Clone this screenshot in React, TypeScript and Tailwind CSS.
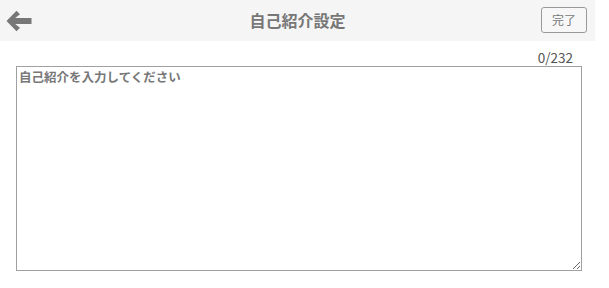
import React, { useState } from "react";

const MAX_LEN = 232;

export default function App() {
  const [text, setText] = useState("");

  return (
    <div
      className="w-[595px] min-h-[288px] bg-white"
      style={{ fontFamily: '"Noto Sans CJK JP", "Noto Sans", sans-serif' }}
    >
      {/* Header */}
      <header className="h-[41px] bg-[#f5f5f5] flex items-center px-[6px]">
        <div className="w-[60px] flex items-center">
          <button className="w-[26px] h-[24px] flex items-center justify-center text-[#777]" aria-label="戻る">
            <svg viewBox="0 0 26 22" width="26" height="22" fill="currentColor">
              <path d="M0.5 11 L10.5 0.8 L14 4.2 L9.2 8 H25.5 V14 H9.2 L14 17.8 L10.5 21.2 Z" />
            </svg>
          </button>
        </div>
        <h1 className="flex-1 text-center text-[16px] font-bold text-[#777] -mt-[2px]">自己紹介設定</h1>
        <div className="w-[60px] flex justify-end">
          <button className="w-[46px] h-[26px] mr-[2px] -mt-[2px] border border-[#999] rounded-[3px] text-[12px] leading-none text-[#777] bg-[#f7f7f7]">
            完了
          </button>
        </div>
      </header>

      {/* Body */}
      <main className="px-[16px] pt-[8px]">
        <div className="flex justify-end pr-[6px] text-[13.5px] leading-[16px] text-[#555]">
          {text.length}/{MAX_LEN}
        </div>
        <textarea
          value={text}
          maxLength={MAX_LEN}
          onChange={(e) => setText(e.target.value)}
          placeholder="自己紹介を入力してください"
          className="block mt-[1px] w-[566px] h-[205px] border border-[#a0a0a0] px-[2px] py-[1px] text-[12.5px] font-bold text-[#555] placeholder:text-[#777] outline-none"
        />
      </main>
    </div>
  );
}
